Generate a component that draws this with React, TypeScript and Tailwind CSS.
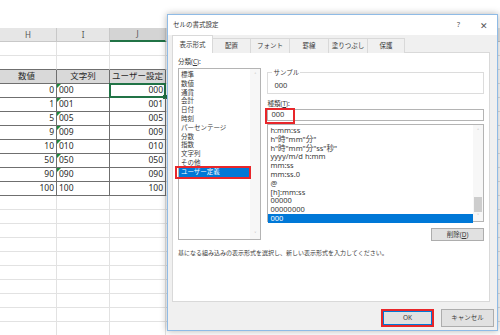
const font = "font-['Noto_Sans','Noto_Sans_CJK_JP',sans-serif]";

const data: [string, string, string][] = [
  ["0", "000", "000"],
  ["1", "001", "001"],
  ["5", "005", "005"],
  ["9", "009", "009"],
  ["10", "010", "010"],
  ["50", "050", "050"],
  ["90", "090", "090"],
  ["100", "100", "100"],
];

const categories = [
  "標準",
  "数値",
  "通貨",
  "会計",
  "日付",
  "時刻",
  "パーセンテージ",
  "分数",
  "指数",
  "文字列",
  "その他",
  "ユーザー定義",
];

const formats = [
  "h:mm:ss",
  'h"時"mm"分"',
  'h"時"mm"分"ss"秒"',
  "yyyy/m/d h:mm",
  "mm:ss",
  "mm:ss.0",
  "@",
  "[h]:mm:ss",
  "00000",
  "00000000",
  "000",
];

function BlankRow({ darkBottom = false }: { darkBottom?: boolean }) {
  const edge = darkBottom ? "border-b-[#6f6f6f]" : "border-b-[#e2e2e2]";
  return (
    <div className="flex h-[14px] shrink-0">
      <div className={`w-[57px] border-r border-b border-r-[#e2e2e2] ${edge}`} />
      <div className={`w-[53px] border-r border-b border-r-[#e2e2e2] ${edge}`} />
      <div className={`w-[56px] border-r border-b border-r-[#e2e2e2] ${edge}`} />
      <div className="flex-1 border-b border-[#e2e2e2]" />
    </div>
  );
}

function Sheet() {
  return (
    <div className="flex flex-col text-[8.5px] text-[#2b2b2b]">
      <div className="h-[28px] shrink-0" />
      <div className="flex h-[14px] shrink-0 bg-[#e6e6e6] text-[8px] text-[#555]">
        <div className="flex w-[57px] items-center justify-center border-r border-b border-[#c8c8c8]">H</div>
        <div className="flex w-[53px] items-center justify-center border-r border-b border-[#c8c8c8]">I</div>
        <div className="flex w-[56px] items-center justify-center border-r border-[#c8c8c8] border-b-2 border-b-[#217346] bg-[#d4d4d4]">
          J
        </div>
        <div className="flex-1 border-b border-[#c8c8c8]" />
      </div>
      <BlankRow />
      <BlankRow darkBottom />
      <div className="flex h-[14px] shrink-0">
        <div className="flex w-[57px] items-center justify-end border-r border-b border-[#6f6f6f] bg-[#d9d9d9] pr-[21px]">数値</div>
        <div className="flex w-[53px] items-center justify-center border-r border-b border-[#6f6f6f] bg-[#d9d9d9]">文字列</div>
        <div className="flex w-[56px] items-center justify-center border-r border-b border-[#6f6f6f] bg-[#d9d9d9]">ユーザー設定</div>
        <div className="flex-1 border-b border-[#e2e2e2]" />
      </div>
      {data.map(([n, s, u], i) => (
        <div key={n} className="flex h-[14px] shrink-0">
          <div className="flex w-[57px] items-center justify-end border-r border-b border-[#6f6f6f] pr-[2px]">{n}</div>
          <div className="relative flex w-[53px] items-center border-r border-b border-[#6f6f6f] pl-[2px]">
            {i < data.length - 1 && (
              <span className="absolute top-0 left-0 h-0 w-0 border-t-[4px] border-r-[4px] border-t-[#1f8b3e] border-r-transparent" />
            )}
            {s}
          </div>
          <div className="relative flex w-[56px] items-center justify-end border-r border-b border-[#6f6f6f] pr-[2px]">
            {i === 0 && (
              <span className="absolute -top-px -left-px -right-px -bottom-px border-2 border-[#217346]">
                <span className="absolute -right-[3px] -bottom-[3px] h-[4px] w-[4px] bg-[#217346]" />
              </span>
            )}
            {u}
          </div>
          <div className="flex-1 border-b border-[#e2e2e2]" />
        </div>
      ))}
      {Array.from({ length: 10 }).map((_, i) => (
        <BlankRow key={i} />
      ))}
    </div>
  );
}

function ScrollArrows({ thumb = false }: { thumb?: boolean }) {
  return (
    <div className="flex w-[10px] shrink-0 flex-col items-center bg-[#f7f7f7] text-[6px] leading-[8px] text-[#a0a0a0]">
      <span className="mt-[2px]">˄</span>
      <div className="flex-1 w-full">
        {thumb && <div className="mx-auto mt-[62px] h-[15px] w-[8px] bg-[#cdcdcd]" />}
      </div>
      <span className="mb-[1px]">˅</span>
    </div>
  );
}

function Dialog() {
  const tabs = [
    { label: "配置", w: "w-[38px]" },
    { label: "フォント", w: "w-[39px]" },
    { label: "罫線", w: "w-[39px]" },
    { label: "塗りつぶし", w: "w-[39px]" },
    { label: "保護", w: "w-[37px]" },
  ];
  return (
    <div className="absolute top-[14px] left-[167px] flex h-[317px] w-[331px] flex-col border border-[#8fbbe6] bg-[#f0f0f0] text-[6.5px] text-[#3a3a3a] shadow-[0_0_7px_rgba(0,0,0,0.3)]">
      <div className="flex h-[20px] shrink-0 items-center bg-white pl-[5px] text-[#333]">
        <span>セルの書式設定</span>
        <span className="ml-auto text-[7px] text-[#555]">?</span>
        <span className="mr-[9px] ml-[20px] text-[9px] leading-none font-light text-[#555]">✕</span>
      </div>
      <div className="flex flex-col pr-[5px] pl-[4px]">
        <div className="relative z-10 flex h-[18px] items-end">
          <div className="flex h-[18px] w-[41px] items-center justify-center border border-b-0 border-[#d9d9d9] bg-white">
            表示形式
          </div>
          {tabs.map((t) => (
            <div
              key={t.label}
              className={`flex h-[15px] ${t.w} items-center justify-center border-t border-r border-[#d9d9d9] bg-[#f0f0f0]`}
            >
              {t.label}
            </div>
          ))}
        </div>
        <div className="-mt-px flex h-[250px] w-[318px] flex-col border border-[#d9d9d9] bg-white px-[5px] pt-[4px]">
          <div className="flex">
            <div className="flex w-[84px] flex-col">
              <div className="h-[11px] leading-[9px]">
                分類(<span className="underline">C</span>):
              </div>
              <div className="flex h-[172px] border border-[#b4b4b4]">
                <div className="flex-1 pt-[2px] leading-[8.8px]">
                  {categories.map((c, i) =>
                    i === categories.length - 1 ? (
                      <div key={c} className="relative bg-[#0078d7] pl-[2px] text-white">
                        <span className="absolute -top-[2px] -right-[1px] -bottom-[2px] -left-[4px] border-2 border-[#e8262a]" />
                        {c}
                      </div>
                    ) : (
                      <div key={c} className="pl-[2px]">
                        {c}
                      </div>
                    )
                  )}
                </div>
                <ScrollArrows />
              </div>
            </div>
            <div className="ml-[6px] flex w-[218px] flex-col">
              <fieldset className="mt-[11px] border border-[#dcdcdc] px-[6px] pb-[3px]">
                <legend className="ml-[-2px] px-[1px] leading-[9px]">サンプル</legend>
                <div className="pt-[4px] text-[7.5px] leading-[9px]">000</div>
              </fieldset>
              <div className="mt-[5px] leading-[9px]">
                種類(<span className="underline">T</span>):
              </div>
              <div className="relative mt-[1px] flex h-[12px] items-center border border-[#b4b4b4] pl-[3px] text-[7.5px]">
                <span className="absolute -top-[2px] -left-[3px] h-[16px] w-[30px] border-2 border-[#e8262a]" />
                000
              </div>
              <div className="mt-[3px] flex h-[98px] border border-[#b4b4b4] text-[7.5px]">
                <div className="flex-1 pt-px leading-[8.8px]">
                  {formats.map((f, i) => (
                    <div
                      key={f}
                      className={i === formats.length - 1 ? "bg-[#0078d7] pl-[2px] text-white" : "pl-[2px]"}
                    >
                      {f}
                    </div>
                  ))}
                </div>
                <ScrollArrows thumb />
              </div>
              <div className="mt-[6px] flex justify-end">
                <div className="flex h-[13px] w-[53px] items-center justify-center border border-[#adadad] bg-[#e1e1e1]">
                  削除(<span className="underline">D</span>)
                </div>
              </div>
            </div>
          </div>
          <div className="mt-[8px] text-[6px] leading-[9px]">
            基になる組み込みの表示形式を選択し、新しい表示形式を入力してください。
          </div>
        </div>
        <div className="mt-[7px] flex justify-end gap-[7px] pr-[-2px]">
          <div className="h-[18px] w-[53px] border-2 border-[#e8262a]">
            <div className="flex h-full items-center justify-center border border-[#0078d7] bg-[#e1e1e1]">OK</div>
          </div>
          <div className="mr-[-2px] flex h-[18px] w-[53px] items-center justify-center border border-[#adadad] bg-[#e1e1e1]">
            キャンセル
          </div>
        </div>
      </div>
    </div>
  );
}

export default function App() {
  return (
    <div className={`relative h-[335px] w-[500px] overflow-hidden bg-white ${font}`}>
      <Sheet />
      <Dialog />
    </div>
  );
}
